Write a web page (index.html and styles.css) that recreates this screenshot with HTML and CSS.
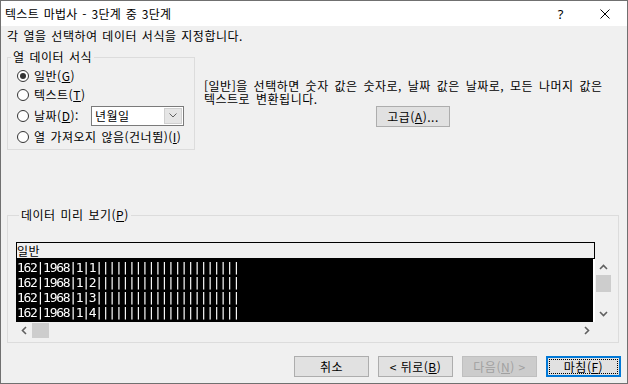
FILE: index.html
```html
<!DOCTYPE html>
<html lang="ko">
  <head>
    <meta charset="UTF-8" />
    <title>텍스트 마법사 - 3단계 중 3단계</title>
    <link rel="stylesheet" href="styles.css">
  </head>
  <body>
    <div class="window">
      <div class="titlebar">
        <span class="title">텍스트 마법사 - 3단계 중 3단계</span>
        <span class="help">?</span>
        <svg class="close" width="10" height="10" viewBox="0 0 10 10">
          <path d="M0.5 0.5 L9.5 9.5 M9.5 0.5 L0.5 9.5" stroke="#000" stroke-width="1" />
        </svg>
      </div>

      <div class="content">
        <p class="intro">각 열을 선택하여 데이터 서식을 지정합니다.</p>

        <div class="top">
          <fieldset class="group format">
            <legend>열 데이터 서식</legend>
            <div class="radio-row r1">
              <span class="radio checked"></span>
              <span>일반(<u>G</u>)</span>
            </div>
            <div class="radio-row r2">
              <span class="radio"></span>
              <span>텍스트(<u>T</u>)</span>
            </div>
            <div class="radio-row r3">
              <span class="radio"></span>
              <span class="date-label">날짜(<u>D</u>):</span>
              <div class="select">
                <span class="select-value">년월일</span>
                <span class="select-btn">
                  <svg width="8" height="5" viewBox="0 0 8 5">
                    <polyline points="0.5,0.5 4,4 7.5,0.5" fill="none" stroke="#606060" stroke-width="1" />
                  </svg>
                </span>
              </div>
            </div>
            <div class="radio-row r4">
              <span class="radio"></span>
              <span>열 가져오지 않음(건너뜀)(<u>I</u>)</span>
            </div>
          </fieldset>

          <div class="desc">
            <p>[일반]을 선택하면 숫자 값은 숫자로, 날짜 값은 날짜로, 모든 나머지 값은<br />텍스트로 변환됩니다.</p>
            <button class="btn advanced">고급(<u>A</u>)...</button>
          </div>
        </div>

        <fieldset class="group preview">
          <legend>데이터 미리 보기(<u>P</u>)</legend>
          <div class="grid">
            <div class="grid-head">일반</div>
            <div class="grid-data">162|1968|1|1||||||||||||||||||||||
162|1968|1|2||||||||||||||||||||||
162|1968|1|3||||||||||||||||||||||
162|1968|1|4||||||||||||||||||||||</div>
            <div class="vscroll">
              <span class="arrow up">
                <svg width="9" height="6" viewBox="0 0 9 6"><polyline points="1,5 4.5,1.5 8,5" fill="none" stroke="#606060" stroke-width="1.6" /></svg>
              </span>
              <span class="thumb"></span>
              <span class="spacer"></span>
              <span class="arrow down">
                <svg width="9" height="6" viewBox="0 0 9 6"><polyline points="1,1 4.5,4.5 8,1" fill="none" stroke="#606060" stroke-width="1.6" /></svg>
              </span>
            </div>
            <div class="hscroll">
              <span class="arrow left">
                <svg width="6" height="9" viewBox="0 0 6 9"><polyline points="5,1 1.5,4.5 5,8" fill="none" stroke="#606060" stroke-width="1.6" /></svg>
              </span>
              <span class="thumb"></span>
              <span class="spacer"></span>
              <span class="arrow right">
                <svg width="6" height="9" viewBox="0 0 6 9"><polyline points="1,1 4.5,4.5 1,8" fill="none" stroke="#606060" stroke-width="1.6" /></svg>
              </span>
            </div>
          </div>
        </fieldset>
      </div>

      <div class="footer">
        <button class="btn">취소</button>
        <button class="btn">&lt; 뒤로(<u>B</u>)</button>
        <button class="btn" disabled>다음(<u>N</u>) &gt;</button>
        <button class="btn default">마침(<u>F</u>)</button>
      </div>
    </div>
  </body>
</html>
```

FILE: styles.css
```css
* {
  margin: 0;
  padding: 0;
  box-sizing: border-box;
}

body {
  font-family: "Noto Sans CJK KR", "Noto Sans", sans-serif;
  font-size: 12px;
  line-height: 14px;
  color: #000;
  background: #f0f0f0;
  word-spacing: 1px;
  letter-spacing: 0.5px;
}

.window {
  width: 628px;
  height: 384px;
  border: 1px solid #707070;
  background: #f0f0f0;
  display: flex;
  flex-direction: column;
}

.titlebar {
  height: 25px;
  flex-shrink: 0;
  background: #fff;
  display: flex;
  align-items: center;
  padding-left: 4px;
}

.title {
  flex: 1;
  letter-spacing: 0.3px;
}

.help {
  font-family: "Noto Sans", sans-serif;
  font-size: 13px;
  margin-right: 36px;
}

.close {
  margin-right: 17px;
}

.content {
  padding: 3px 8px 0 6px;
}

.top {
  display: flex;
  margin-top: 7px;
}

.group {
  border: 1px solid #dcdcdc;
}

.group legend {
  margin-left: 3px;
  padding: 0 2px;
  line-height: 14px;
}

.format {
  width: 188px;
  padding: 3px 0 2px 0;
}

.radio-row {
  display: flex;
  align-items: center;
  padding-left: 9px;
}

.r1 { height: 18px; }
.r2 { height: 19px; }
.r3 { height: 23px; }
.r4 { height: 20px; }

.radio {
  width: 12px;
  height: 12px;
  border: 1px solid #333;
  border-radius: 50%;
  background: #fff;
  margin-right: 5px;
  display: flex;
  align-items: center;
  justify-content: center;
}

.radio.checked::after {
  content: "";
  width: 6px;
  height: 6px;
  border-radius: 50%;
  background: #333;
}

.date-label {
  width: 57px;
}

.select {
  width: 93px;
  height: 20px;
  border: 1px solid #7a7a7a;
  background: #fff;
  display: flex;
}

.select-value {
  flex: 1;
  padding-left: 3px;
  line-height: 18px;
}

.select-btn {
  width: 18px;
  margin: 1px;
  background: #e5e5e5;
  border: 1px solid #cfcfcf;
  display: flex;
  align-items: center;
  justify-content: center;
}

.desc {
  margin-left: 9px;
  padding-top: 29px;
}

.desc p {
  line-height: 13px;
  white-space: nowrap;
  word-spacing: 2px;
}

.btn {
  font: inherit;
  letter-spacing: 0.5px;
  width: 75px;
  height: 21px;
  border: 1px solid #adadad;
  background: #e1e1e1;
  color: #000;
  line-height: 19px;
  text-align: center;
}

.advanced {
  margin: 1px 0 0 172px;
  width: 74px;
}

.preview {
  width: 612px;
  margin-top: 58px;
  padding: 20px 0 3px 8px;
}

.grid {
  display: grid;
  grid-template-columns: 579px 17px;
  grid-template-rows: 17px 63px 17px;
}

.grid-head {
  grid-column: 1;
  grid-row: 1;
  border: 1px solid #000;
  background: #f0f0f0;
  line-height: 15px;
}

.grid-data {
  grid-column: 1;
  grid-row: 2;
  background: #000;
  color: #fff;
  border-right: 2px solid #fff;
  padding: 1px 0 0 1px;
  overflow: hidden;
  white-space: pre;
  font-family: "DejaVu Sans Mono", monospace;
  font-size: 13px;
  letter-spacing: -1.3px;
  line-height: 15px;
  word-spacing: 0;
  filter: grayscale(1);
}

.vscroll {
  grid-column: 2;
  grid-row: 2;
  display: flex;
  flex-direction: column;
  align-items: center;
}

.hscroll {
  grid-column: 1;
  grid-row: 3;
  display: flex;
  align-items: center;
}

.arrow {
  display: flex;
  align-items: center;
  justify-content: center;
  width: 16px;
  height: 16px;
}

.vscroll .arrow.down {
  height: 17px;
}

.thumb {
  background: #cdcdcd;
}

.vscroll .thumb {
  width: 15px;
  height: 17px;
}

.hscroll .thumb {
  width: 17px;
  height: 15px;
}

.spacer {
  flex: 1;
}

.footer {
  display: flex;
  justify-content: flex-end;
  gap: 9px;
  padding-right: 6px;
  margin-top: 13px;
}

.btn:disabled {
  background: #cccccc;
  border-color: #bfbfbf;
  color: #a0a0a0;
}

.btn.default {
  border: 2px solid #0078d7;
  line-height: 17px;
  outline: 1px dotted #000;
  outline-offset: -4px;
}
```
